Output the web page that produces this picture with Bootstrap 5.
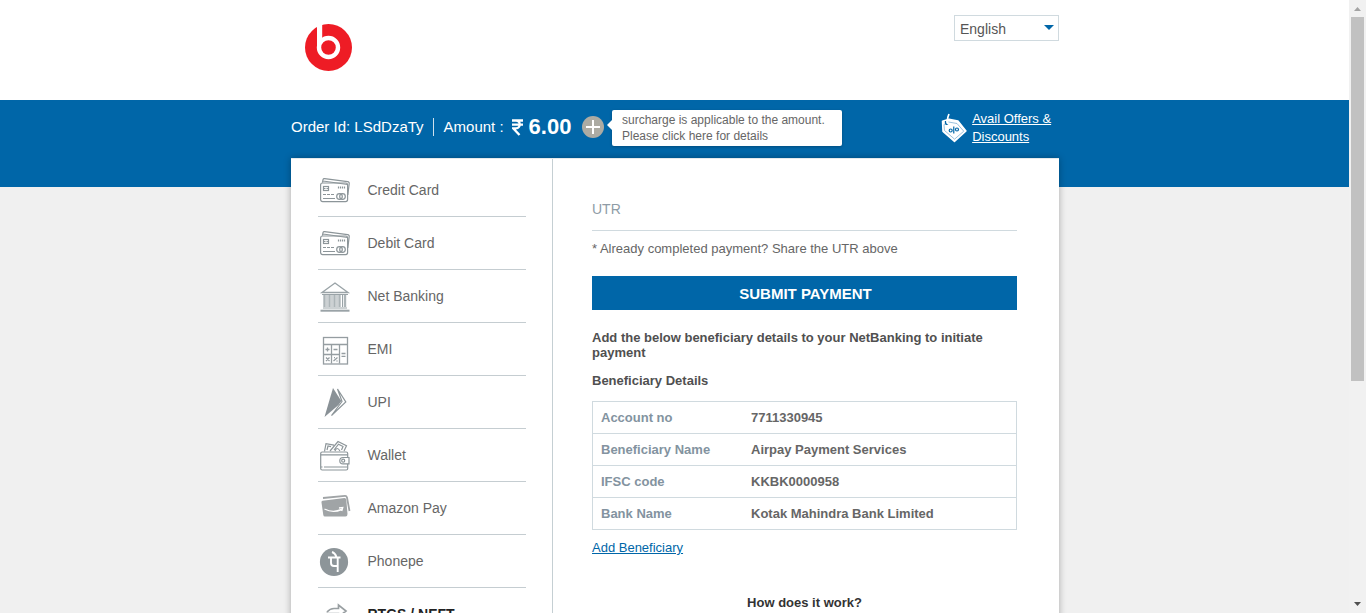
<!DOCTYPE html>
<html lang="en">
<head>
<meta charset="utf-8">
<meta name="viewport" content="width=device-width, initial-scale=1">
<title>Payment</title>
<link href="https://cdn.jsdelivr.net/npm/bootstrap@5.3.0/dist/css/bootstrap.min.css" rel="stylesheet">
<style>
  body { font-family: "Liberation Sans", Arial, sans-serif; font-size: 14px; color: #666; background: #f0f0f0; }
  .screen { height: 613px; }
  .wrap { width: 768px; margin-left: 291px; }
  .top { height: 100px; }
  .brand { margin: 24px 0 0 14px; }
  .lang { width: 105px; height: 26px; margin-top: 15px; padding: 1px 4px 0 5px; border: 1px solid #d0dadf; color: #555; font-size: 14px; line-height: 25px; }
  .order { height: 58px; background: #0066a8; color: #fff; font-size: 15px; line-height: 18px; }
  .order .summary { width: 313px; height: 54px; }
  .order .sep { width: 1px; height: 18px; background: #cfe0ec; margin: 0 10px 0 9px; }
  .sum { font-size: 22px; line-height: 26px; margin-left: 8px; }
  .rupee { margin-right: 6px; }
  .tip { width: 230px; height: 36px; margin: 10px 0 0 8px; padding: 2px 10px; border-radius: 2px; color: #666; font-size: 12px; line-height: 16px; box-shadow: 0 1px 3px rgba(0,0,0,.25); }
  .tip::before { content: ""; position: absolute; left: -5px; top: 10px; border: 5px solid transparent; border-right-color: #fff; border-left: 0; }
  .tag { margin: 13px 5px 0 99.500px; }
  .offers { width: 87px; margin-top: 10px; font-size: 13px; line-height: 18px; color: #fff; }
  .offers:hover { color: #fff; }
  .lower { background: linear-gradient(#0066a8 29px, #f0f0f0 29px); }
  .panel { height: 480px; border-top: 1px solid #e5e9eb; box-shadow: 0 0 7px rgba(0,0,0,.3); }
  .methods { width: 262px; padding: 5px 26px 0 27px; border-right: 1px solid #c5cfd3; }
  .method { height: 53px; border-bottom: 1px solid #c5cdd1; font-size: 14px; color: #666; text-decoration: none; }
  .method svg { margin: 0 15.500px 0 0; }
  .method span { padding-top: 1px; }
  .method.now { color: #222; font-weight: bold; }
  .detail { width: 425px; margin-left: 39px; font-size: 13px; line-height: 15px; }
  .utr { height: 72px; padding: 42px 0 0; border-bottom: 1px solid #d0dadf; font-size: 14px; line-height: 16px; color: #8f9ca6; }
  .note { margin: 9px 0 0; line-height: 18px; }
  .pay { height: 34px; margin-top: 18px; background: #0066a8; color: #fff; font-size: 15px; font-weight: bold; line-height: 35px; border-radius: 0; padding: 0 0 0 2px; border: 0; }
  .strong { font-weight: bold; color: #505050; }
  .facts { width: 425px; margin: 13px 0 0; border: 1px solid #d0dadf; font-weight: bold; }
  .facts div { height: 32px; line-height: 31px; padding-left: 8px; border-bottom: 1px solid #d0dadf; }
  .facts div:last-child { height: 31px; border-bottom: 0; }
  .facts dt { width: 150px; color: #8393a0; }
  .facts dd { margin: 0; color: #666; }
  .bar { width: 17px; background: #f1f1f1; }
  .thumb { width: 13px; height: 364px; background: #c1c1c1; margin: 0 0 0 2px; }
</style>
</head>
<body class="overflow-hidden">
<svg class="d-none" aria-hidden="true">
  <symbol id="cards" viewBox="0 0 32 32">
    <g fill="none" stroke="#8c9599" stroke-width="1.200">
      <rect x="1.600" y="9" width="27" height="18.600" rx="2"/>
      <path d="M3.400 8.600 4 5.600Q4.300 4.400 5.600 4.600L28.600 7.700Q30.500 8 30.200 9.700L28.800 21M4 7l24.500 3.500"/>
      <rect x="4.500" y="12.500" width="5" height="4"/><path d="M4.500 14.500h2M7.500 14.500h2"/>
      <path d="M19.500 12.500v2M21.500 12.500v2M23.500 12.500v2M25.500 12.500v2M4 20.500h3M8 20.500h3M12 20.500h3M4 24.500h12"/>
      <circle cx="20.500" cy="22.500" r="2.800"/><circle cx="23.500" cy="22.500" r="2.800"/>
    </g>
  </symbol>
</svg>
<div class="screen d-flex">
  <div class="flex-grow-1 d-flex flex-column overflow-hidden">
    <header class="top bg-white flex-shrink-0">
      <div class="wrap d-flex justify-content-between align-items-start">
        <svg class="brand" width="48" height="48" viewBox="0 0 48 48"><circle cx="23.500" cy="23.500" r="23.500" fill="#ee1c25"/><path d="M12 0h5.200v24H12z" fill="#fff"/><circle cx="23.500" cy="23.500" r="9.500" fill="#ee1c25" stroke="#fff" stroke-width="4.400"/></svg>
        <div class="lang d-flex justify-content-between"><span>English</span><svg width="10" height="18" viewBox="0 0 10 18"><path d="M0 8h10L5 13z" fill="#0066a8"/></svg></div>
      </div>
    </header>
    <section class="order flex-shrink-0">
      <div class="wrap d-flex">
        <div class="summary d-flex align-items-center text-nowrap flex-shrink-0"><span>Order Id: LSdDzaTy</span><span class="sep"></span><span>Amount :</span>
          <strong class="sum d-flex align-items-center"><svg class="rupee" width="11" height="17" viewBox="0 0 11 17" fill="none" stroke="#fff" stroke-width="2.300"><path d="M0 1.500h11M0 5.700h11M1 1.500h3C9 1.500 9 9.300 4 9.300H1.200L7.500 16"/></svg><span>6.00</span></strong>
          <svg class="ms-auto" width="22" height="22" viewBox="0 0 22 22"><circle cx="11" cy="11" r="11" fill="#acaba3"/><path d="M4 11h14M11 4v14" stroke="#fff" stroke-width="2"/></svg>
        </div>
        <div class="tip bg-white position-relative text-nowrap">surcharge is applicable to the amount.<br>Please click here for details</div>
        <svg class="tag" width="26" height="30" viewBox="0 0 26 30"><path d="M1.500 8.200 8 6.200 17 8 25 18 13.500 28.500 2 18.500z" fill="#fff" stroke="#fff" stroke-width="1.500" stroke-linejoin="round"/><path d="M3 11.500 7.500 9l8.500 1.500 6.800 7.700-9.200 8L3.500 17.500z" fill="none" stroke="#6da6cd" stroke-width=".7"/><path d="M4.500 8Q4 12.500 7 11" fill="none" stroke="#0066a8" stroke-width="1.300"/><path d="M7 11Q5.500 7 8 1" fill="none" stroke="#fff" stroke-width="1.700"/><g fill="none" stroke="#0066a8" stroke-width="1.200"><circle cx="9.700" cy="17.500" r="1.500"/><circle cx="16" cy="16.500" r="1.500"/><path d="M12.800 13.500v7"/></g></svg>
        <a href="#" class="offers">Avail Offers &amp; Discounts</a>
      </div>
    </section>
    <main class="lower flex-grow-1">
      <div class="wrap panel bg-white d-flex">
        <nav class="methods flex-shrink-0">
          <a href="#" class="method d-flex align-items-center"><svg width="34" height="32" viewBox="-1 0 34 32"><use href="#cards" width="32" height="32"/></svg><span>Credit Card</span></a>
          <a href="#" class="method d-flex align-items-center"><svg width="34" height="32" viewBox="-1 0 34 32"><use href="#cards" width="32" height="32"/></svg><span>Debit Card</span></a>
          <a href="#" class="method d-flex align-items-center"><svg width="34" height="32" viewBox="-1 0 34 32"><g fill="none" stroke="#9aa3a7"><path d="M3 12.500 16 3l13 9.500z" stroke-width="1.400"/><path d="M3 14.500h26M4 28h24" stroke-width="1.200"/><path d="M5.500 15v12M10.500 15v12M15.500 15v12M20.500 15v12M26 15v12" stroke-width="2.400" stroke="#adb5b8"/><path d="M8 15v12M13 15v12M18 15v12M23.500 15v12" stroke-width="1"/><path d="M1.500 30.700h29" stroke-width="2"/></g></svg><span>Net Banking</span></a>
          <a href="#" class="method d-flex align-items-center"><svg width="34" height="32" viewBox="-1 0 34 32"><g fill="none" stroke="#959da1" stroke-width="1.300"><rect x="4.500" y="4.500" width="24" height="26.500"/><path d="M4.500 11.500h24M4.500 21.500h16M12.500 11.500v19M20.500 11.500v19M6.500 16.500h4M8.500 14.500v4M14.500 16.500h4M22.500 20.500h4M22.500 23.300h4M7 24.500l3.500 3.500M10.500 24.500 7 28M14.500 28 18.500 24.500M15 24.700h1M17.500 28h1"/></g></svg><span>EMI</span></a>
          <a href="#" class="method d-flex align-items-center"><svg width="34" height="32" viewBox="-1 0 34 32"><path d="M18.500 3 26.800 16 12.500 29.500 23 15.500z" fill="#fff" stroke="#8c9599" stroke-width="1.200"/><path d="M14 2 22.300 15 19.500 19 5.500 31z" fill="#899196"/></svg><span>UPI</span></a>
          <a href="#" class="method d-flex align-items-center"><svg width="34" height="32" viewBox="-1 0 34 32"><g fill="none" stroke="#8c9599" stroke-width="1.200"><rect x="1.700" y="13" width="27" height="18" rx="1.500"/><path d="M2 15.800h26.500M5 28h23M2 28h1.500M5.500 12.500 7 4.700l8 1.500M8 11l1-4 3 .7M11 12 19 2.500l8.500 4.200L25 12M15 11l4.500-5.800L24 7.500 22.500 11M16 12q2-5 5 0"/><path fill="#fff" d="M30 18.500h-6a3.200 3.200 0 0 0 0 6.400h6z"/><circle cx="24.200" cy="21.700" r="1.500"/></g></svg><span>Wallet</span></a>
          <a href="#" class="method d-flex align-items-center"><svg width="34" height="32" viewBox="-1 0 34 32"><path d="M4 6 26 3.800Q27.500 3.700 28 5.500L30.500 19" fill="none" stroke="#a0a4a6" stroke-width="1.800"/><path d="M3.500 8.700 25.500 6Q27 6 27.300 7.500L28.500 22Q28.500 24.500 26.500 24.500H6Q4.500 24.500 4.300 23L2.500 10.500Q2.300 9 3.500 8.700z" fill="#a0a4a6"/><path d="M5.500 17Q14 21.500 22.500 17.500M20 16l3.700-.5-1 3.500" fill="none" stroke="#fff" stroke-width="1.400"/></svg><span>Amazon Pay</span></a>
          <a href="#" class="method d-flex align-items-center"><svg width="34" height="32" viewBox="-1 0 34 32"><circle cx="15" cy="17" r="14.100" fill="#8d9599"/><path d="M9 12.500h12.500M12 12.500v5.500Q12 21 15 21h3M18.700 12.500V27M17.500 12Q16 8 13 7" fill="none" stroke="#fff" stroke-width="1.900"/></svg><span>Phonepe</span></a>
          <a href="#" class="method now d-flex align-items-center"><svg width="34" height="32" viewBox="-1 0 34 32"><path d="M8 14Q11 10.500 15 10.500h4.500V7L27 13l-7.500 6v-3.500H7" fill="none" stroke="#999fa2" stroke-width="1.700"/></svg><span>RTGS / NEFT</span></a>
        </nav>
        <section class="detail">
          <div class="utr">UTR</div>
          <p class="note">* Already completed payment? Share the UTR above</p>
          <button class="pay btn w-100 d-block">SUBMIT PAYMENT</button>
          <p class="strong mb-0" style="margin-top:20px">Add the below beneficiary details to your NetBanking to initiate payment</p>
          <p class="strong mb-0" style="margin-top:13px">Beneficiary Details</p>
          <dl class="facts">
            <div class="d-flex"><dt>Account no</dt><dd>7711330945</dd></div>
            <div class="d-flex"><dt>Beneficiary Name</dt><dd>Airpay Payment Services</dd></div>
            <div class="d-flex"><dt>IFSC code</dt><dd>KKBK0000958</dd></div>
            <div class="d-flex"><dt>Bank Name</dt><dd>Kotak Mahindra Bank Limited</dd></div>
          </dl>
          <a href="#" class="d-inline-block" style="color:#0066a8;margin-top:10px">Add Beneficiary</a>
          <p class="text-center fw-bold mb-0" style="color:#333;margin-top:40px">How does it work?</p>
        </section>
      </div>
    </main>
  </div>
  <div class="bar flex-shrink-0 d-flex flex-column">
    <svg class="flex-shrink-0" width="17" height="17" viewBox="0 0 17 17"><path d="M5 11h7L8.500 7z" fill="#a3a3a3"/></svg>
    <div class="thumb"></div>
    <svg class="mt-auto" width="17" height="17" viewBox="0 0 17 17"><path d="M5 6h7l-3.500 4z" fill="#505050"/></svg>
  </div>
</div>
<script src="https://cdn.jsdelivr.net/npm/bootstrap@5.3.0/dist/js/bootstrap.bundle.min.js"></script>
</body>
</html>
